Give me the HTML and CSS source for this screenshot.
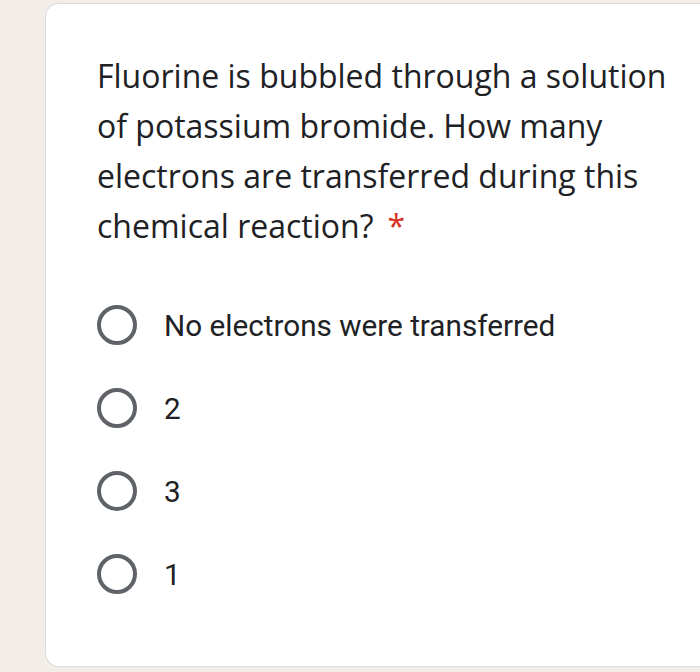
FILE: index.html
```html
<!DOCTYPE html>
<html>
<head>
<meta charset="utf-8">
<link rel="stylesheet" href="styles.css">
</head>
<body>
<div class="card">
  <div class="question">Fluorine is bubbled through a solution of potassium bromide. How many electrons are transferred during this chemical reaction?<span class="req">*</span></div>
  <div class="options">
    <div class="option"><span class="radio"></span><span class="label">No electrons were transferred</span></div>
    <div class="option"><span class="radio"></span><span class="label">2</span></div>
    <div class="option"><span class="radio"></span><span class="label">3</span></div>
    <div class="option"><span class="radio"></span><span class="label">1</span></div>
  </div>
</div>
</body>
</html>
```
FILE: styles.css
```css
html, body {
  margin: 0;
  padding: 0;
  background: #f3ede7;
  overflow: hidden;
}
body {
  width: 700px;
  height: 672px;
}
.card {
  box-sizing: border-box;
  margin: 3px 0 0 45px;
  width: 655px;
  height: 664px;
  background: #ffffff;
  border: 1px solid #dadce0;
  border-right: none;
  border-radius: 14px 0 0 14px;
  padding: 47px 0 0 51px;
}
.question {
  font-family: "Open Sans", sans-serif;
  font-size: 32px;
  line-height: 50px;
  color: #202124;
  width: 578px;
}
.req {
  display: inline-block;
  color: #d93025;
  margin-left: 14px;
}
.options {
  margin-top: 54px;
  display: flex;
  flex-direction: column;
  gap: 43px;
}
.option {
  display: flex;
  align-items: center;
  gap: 27px;
}
.radio {
  box-sizing: border-box;
  width: 40px;
  height: 40px;
  border: 4px solid #5f6368;
  border-radius: 50%;
  flex: none;
}
.label {
  font-family: Roboto, sans-serif;
  font-size: 29.7px;
  color: #202124;
}
```
